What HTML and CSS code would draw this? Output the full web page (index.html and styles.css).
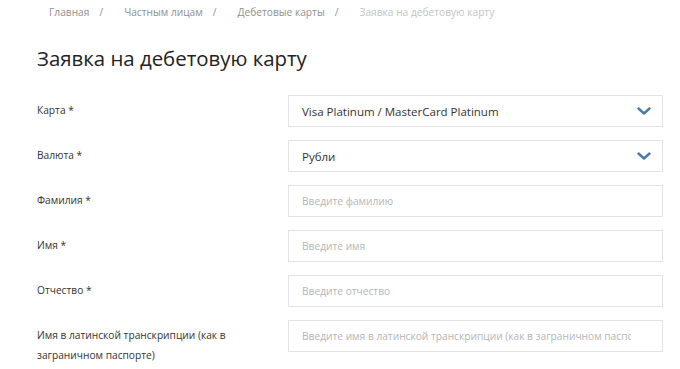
FILE: index.html
```html
<!DOCTYPE html>
<html lang="ru">
<head>
<meta charset="utf-8">
<title>Заявка на дебетовую карту</title>
<link rel="stylesheet" href="styles.css">
</head>
<body>
<div class="page">
  <nav class="crumbs">
    <a class="crumb" href="#">Главная</a><span class="sep">/</span>
    <a class="crumb" href="#">Частным лицам</a><span class="sep">/</span>
    <a class="crumb" href="#">Дебетовые карты</a><span class="sep">/</span>
    <span class="crumb current">Заявка на дебетовую карту</span>
  </nav>
  <h1 class="title">Заявка на дебетовую карту</h1>
  <form class="form">
    <div class="row">
      <label class="label">Карта *</label>
      <div class="field select"><span class="value">Visa Platinum / MasterCard Platinum</span>
        <svg class="chev" width="14" height="8" viewBox="0 0 14 8"><path d="M1.5 1.5 L7 6.5 L12.5 1.5" fill="none" stroke="#4d7ba6" stroke-width="2.4" stroke-linecap="round" stroke-linejoin="round"/></svg>
      </div>
    </div>
    <div class="row">
      <label class="label">Валюта *</label>
      <div class="field select"><span class="value">Рубли</span>
        <svg class="chev" width="14" height="8" viewBox="0 0 14 8"><path d="M1.5 1.5 L7 6.5 L12.5 1.5" fill="none" stroke="#4d7ba6" stroke-width="2.4" stroke-linecap="round" stroke-linejoin="round"/></svg>
      </div>
    </div>
    <div class="row">
      <label class="label">Фамилия *</label>
      <div class="field"><span class="ph">Введите фамилию</span></div>
    </div>
    <div class="row">
      <label class="label">Имя *</label>
      <div class="field"><span class="ph">Введите имя</span></div>
    </div>
    <div class="row">
      <label class="label">Отчество *</label>
      <div class="field"><span class="ph">Введите отчество</span></div>
    </div>
    <div class="row">
      <label class="label">Имя в латинской транскрипции (как в заграничном паспорте)</label>
      <div class="field"><span class="ph">Введите имя в латинской транскрипции (как в заграничном паспорте)</span></div>
    </div>
  </form>
</div>
</body>
</html>
```
FILE: styles.css
```css
* { box-sizing: border-box; }
html, body { margin: 0; padding: 0; background: #fff; }
body { font-family: "Open Sans", "Noto Sans", sans-serif; color: #333; }
.page { padding: 0 17px 0 37px; }
.crumbs {
  display: flex;
  align-items: center;
  height: 24px;
  padding-left: 12px;
  font-size: 10.2px;
  white-space: nowrap;
}
.crumb { color: #8f8f8f; text-decoration: none; }
.crumb.current { color: #c4c4c4; }
.sep { color: #8f8f8f; margin: 0 21px 0 10px; }
.title {
  margin: 19px 0 0;
  font-size: 20.4px;
  font-weight: 400;
  line-height: 30px;
  color: #222;
}
.form {
  display: flex;
  flex-direction: column;
  gap: 13px;
  margin-top: 22px;
}
.row {
  display: grid;
  grid-template-columns: 251px 375px;
  align-items: start;
}
.label {
  font-size: 10.2px;
  line-height: 20px;
  padding-top: 5px;
  color: #333;
  padding-right: 40px;
}
.field {
  height: 32px;
  border: 1px solid #e3e3e3;
  display: flex;
  align-items: center;
  padding: 0 31px 0 13px;
  overflow: hidden;
  white-space: nowrap;
}
.select { justify-content: space-between; padding-right: 11px; }
.value { font-size: 11.5px; color: #333; }
.ph { font-size: 10.2px; color: #b5b5b5; overflow: hidden; }
.chev { display: block; flex-shrink: 0; }
```
